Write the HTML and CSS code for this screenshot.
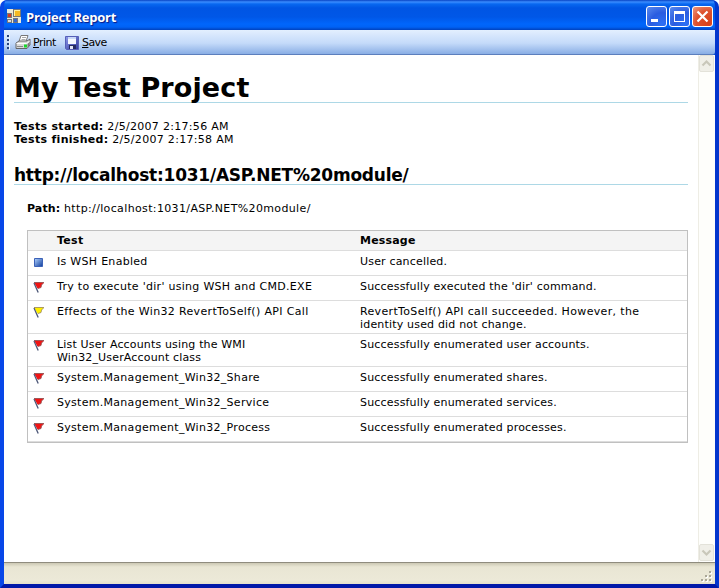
FILE: index.html
```
<!DOCTYPE html>
<html lang="en">
<head>
<meta charset="utf-8">
<title>Project Report</title>
<link rel="stylesheet" href="styles.css">
</head>
<body>
<svg width="0" height="0" class="defs">
  <defs>
    <linearGradient id="sq" x1="0" y1="0" x2="1" y2="1"><stop offset="0" stop-color="#b4d4ff"/><stop offset="1" stop-color="#0c3c9c"/></linearGradient>
    <linearGradient id="disk" x1="0" y1="0" x2="1" y2="1"><stop offset="0" stop-color="#8d98ea"/><stop offset="1" stop-color="#313a9c"/></linearGradient>
    <symbol id="flag" viewBox="0 0 12 12">
      <path d="M1 .5h10L8.500 3 8 5.500 4.500 6.500Z" fill="var(--flag)"/>
      <path d="M1 .5h10M10.500 1 8.500 3 8 5.500 5 6.500" stroke="var(--edge)" stroke-width=".9" fill="none"/>
      <path d="M1 1 5.200 10.500" stroke="#4d5878" stroke-width="1.300" fill="none"/>
    </symbol>
    <symbol id="up" viewBox="0 0 14 15"><path d="M2.500 9.500 6.500 5.500l4 4" fill="none" stroke="#c9c7ba" stroke-width="2.200"/></symbol>
  </defs>
</svg>
<div class="window">
  <header class="titlebar">
    <svg class="app-icon" width="14" height="14" viewBox="0 0 14 14" shape-rendering="crispEdges">
      <path fill="#ece9d8" d="M0 0h14v14H0z"/><path fill="#777" d="M0 4h5v5H0zM6 0h8v8H6zM0 10h5v4H0zM6 9h5v5H6z"/>
      <path fill="#d43b22" d="M1 5h3v3H1z"/><path fill="#fff0a0" d="M7 1h6v6H7z"/><path fill="#f5b923" d="M8 2h5v5H8z"/>
      <path fill="#ddd" d="M1 11h3v2H1z"/><path fill="#3565cd" d="M7 10h3v3H7z"/>
    </svg>
    <h1 class="title">Project Report</h1>
    <div class="controls">
      <button class="ctl" aria-label="Minimize"><svg width="19" height="19"><path fill="#fff" d="M4 12h7v3H4z"/></svg></button>
      <button class="ctl" aria-label="Maximize"><svg width="19" height="19"><path fill="#fff" fill-rule="evenodd" d="M4 4h11v11H4zM5 7v7h9V7z"/></svg></button>
      <button class="ctl close" aria-label="Close"><svg width="19" height="19"><path d="m4.500 4.500 10 10m0-10-10 10" stroke="#fff" stroke-width="2.200"/></svg></button>
    </div>
  </header>
  <nav class="toolbar">
    <span class="grip"></span>
    <svg width="16" height="16" viewBox="0 0 16 16">
      <path d="M6 1.500h7l-2 6H4z" fill="#fff" stroke="#777"/><path d="M7 3.500h4M6.500 5.500h4" stroke="#aaa"/>
      <path d="M1 9l3-2h8l3-2v6l-3 3.500H1z" fill="#d8d8d8" stroke="#666"/><path d="M1.500 9.500h10l3-2" stroke="#fff" fill="none"/>
      <path d="M2 12.500h6" stroke="#888"/><path d="M9 10.500h3v3H9z" fill="#19d82c"/><path d="M12.500 10l2-2v3l-2 2.500z" fill="#777"/>
    </svg>
    <span class="tool print"><u>P</u>rint</span>
    <svg class="save-icon" width="14" height="14" viewBox="0 0 14 14">
      <path d="M.5.5h13v13h-12l-1-1z" fill="url(#disk)" stroke="#5660b8"/><path d="M3 1h8v7H3z" fill="#f4f8ff"/><path d="M3 1h8v2H3z" fill="#c8d8f8"/>
      <path d="M4 9h7v4H4z" fill="#252b60"/><path d="M5 10h3v3H5z" fill="#e4e7f5"/>
    </svg>
    <span class="tool save"><u>S</u>ave</span>
  </nav>
  <div class="view">
    <main class="report">
      <h2 class="project"><span>My Test Project</span></h2>
      <p class="times"><b>Tests started:</b> <span>2/5/2007 2:17:56 AM</span><br><b>Tests finished:</b> <span>2/5/2007 2:17:58 AM</span></p>
      <h3 class="url"><span>http://localhost:1031/ASP.NET%20module/</span></h3>
      <p class="path"><b>Path:</b> <span>http://localhost:1031/ASP.NET%20module/</span></p>
      <div class="table">
        <div class="row head"><span></span><b>Test</b><b>Message</b></div>
        <div class="row"><svg class="square" width="9" height="9"><path fill="url(#sq)" stroke="#3c62b8" d="M.5.5h8v8h-8z"/></svg><span>Is WSH Enabled</span><span>User cancelled.</span></div>
        <div class="row"><svg class="flag"><use href="#flag"/></svg><span>Try to execute 'dir' using WSH and CMD.EXE</span><span>Successfully executed the 'dir' command.</span></div>
        <div class="row"><svg class="flag yellow"><use href="#flag"/></svg><span class="wide">Effects of the Win32 RevertToSelf() API Call</span><span><span class="wide">RevertToSelf() API call succeeded. However, the</span><br>identity used did not change.</span></div>
        <div class="row"><svg class="flag"><use href="#flag"/></svg><span class="tight">List User Accounts using the WMI<br>Win32_UserAccount class</span><span>Successfully enumerated user accounts.</span></div>
        <div class="row"><svg class="flag"><use href="#flag"/></svg><span>System.Management_Win32_Share</span><span>Successfully enumerated shares.</span></div>
        <div class="row"><svg class="flag"><use href="#flag"/></svg><span>System.Management_Win32_Service</span><span>Successfully enumerated services.</span></div>
        <div class="row"><svg class="flag"><use href="#flag"/></svg><span>System.Management_Win32_Process</span><span>Successfully enumerated processes.</span></div>
      </div>
    </main>
    <aside class="scrollbar">
      <div class="arrow"><svg width="14" height="15"><use href="#up"/></svg></div>
      <div class="arrow down"><svg width="14" height="15"><use href="#up"/></svg></div>
    </aside>
  </div>
  <footer class="status">
    <svg width="13" height="13" shape-rendering="crispEdges"><path fill="#fff" d="M9 1h2v2H9zM5 5h2v2H5zM9 5h2v2H9zM1 9h2v2H1zM5 9h2v2H5zM9 9h2v2H9z"/><path fill="#aaa797" d="M8 0h2v2H8zM4 4h2v2H4zM8 4h2v2H8zM0 8h2v2H0zM4 8h2v2H4zM8 8h2v2H8z"/></svg>
  </footer>
</div>
</body>
</html>
```
FILE: styles.css
```
* { box-sizing: border-box; }
body { margin: 0; background: #fff; color: #000; font: 11px/13px "DejaVu Sans", sans-serif; overflow: hidden; }
.defs { display: block; }
h1, h2, h3, p { margin: 0; }
.window {
  width: 719px; height: 588px; display: flex; flex-direction: column;
  border: solid; border-width: 0 4px 4px; border-radius: 7px 7px 0 0;
  background: #0054e3; overflow: hidden;
  border-color: #0540e0 #0336cd #0018a8 #0847e8;
}
.titlebar {
  height: 30px; margin: 0 -4px; padding: 0 6px 0 7px; flex: none; display: flex; align-items: center;
  background: linear-gradient(#0843c4 0, #3a8cff 2px, #0868f0 4px, #0055e4 8px, #0057e7 17px, #0066fc 24px, #0062f5 27px, #0041bd 30px);
}
.app-icon { margin-top: 2px; }
.title { margin: 3px auto 0 5px; color: #fff; font: bold 13px/16px "Open Sans", sans-serif; letter-spacing: -.25px; text-shadow: 1px 1px 1px #0a1883; }
.controls { display: flex; gap: 2px; margin-top: 3px; }
.ctl { width: 21px; height: 21px; padding: 0; border: 1px solid #fff; border-radius: 3px; background: radial-gradient(circle at 80% 90%, #2c70f5, #2a5ce0 50%, #5b8bee 100%); }
.ctl svg { display: block; }
.ctl.close { background: radial-gradient(circle at 80% 85%, #d8421b, #dd522f 55%, #ee9a80 100%); }
.toolbar { height: 25px; flex: none; display: flex; align-items: center; padding-left: 3px; background: linear-gradient(#e3efff, #c4daf9 55%, #89aee5); border-bottom: 1px solid #5c7fbd; border-radius: 0 0 3px 0; }
.grip { width: 3px; height: 15px; margin-right: 5px; background: repeating-linear-gradient(#27417a 0 2px, transparent 2px 4px); border-right: 1px solid #e8f2ff; }
.tool { margin-left: 2px; }
.print { width: 32px; letter-spacing: -.5px; }
.save { letter-spacing: -.6px; margin-left: 3px; }
.save-icon { margin-top: 1px; }
u { text-underline-offset: 1px; text-decoration-thickness: 1px; }
.view { flex: none; height: 507px; display: flex; background: #fff; }
.report { width: 694px; padding: 18px 10px 0; letter-spacing: .3px; }
.project { height: 30px; border-bottom: 1px solid #add8e6; font: bold 27px/30px "DejaVu Sans", sans-serif; letter-spacing: .13px; white-space: nowrap; }
.times { margin-top: 17px; }
.url { height: 22px; margin-top: 17px; padding-top: 2px; border-bottom: 1px solid #add8e6; font: bold 17px/20px "DejaVu Sans", sans-serif; letter-spacing: -.23px; white-space: nowrap; }
.path { margin: 17px 0 0 13px; }
.path b { letter-spacing: .1px; }
.path span { letter-spacing: .36px; }
.table { margin: 15px 0 0 13px; width: 661px; border: 1px solid #c0c0c0; }
.row { display: grid; grid-template-columns: 29px 303px 1fr; min-height: 25px; padding: 4px 0 2px; border-bottom: 1px solid #ddd; white-space: nowrap; align-items: start; letter-spacing: .18px; }
.row > :nth-child(2) { letter-spacing: .29px; }
.row > .tight { letter-spacing: .16px; }
.row .wide { letter-spacing: .34px; }
.row.head { min-height: 20px; padding: 3px 0; background: #f4f4f4; }
.square { margin: 3px 0 -3px 6px; }
.flag { --flag: #f01414; --edge: #985050; width: 12px; height: 12px; margin: 2px 0 -3px 5px; }
.yellow { --flag: #fff000; --edge: #a49058; }
.scrollbar { width: 17px; display: flex; flex-direction: column; justify-content: space-between; padding: 0 0 1px; background: #fefefb; border-left: 1px solid #eeede5; }
.arrow { width: 15px; height: 17px; background: #f0efe8; border: 1px solid #e3e2d9; border-radius: 2px; }
.arrow svg { display: block; }
.down { transform: rotate(180deg); }
.status { flex: 1; display: flex; justify-content: flex-end; align-items: flex-end; padding: 0 1px 0 0; border-top: 1px solid #8f8c7e; background: linear-gradient(#ccc8b4, #e9e6d4 4px, #ece9d8 17px, #e4e0cc); }
```
